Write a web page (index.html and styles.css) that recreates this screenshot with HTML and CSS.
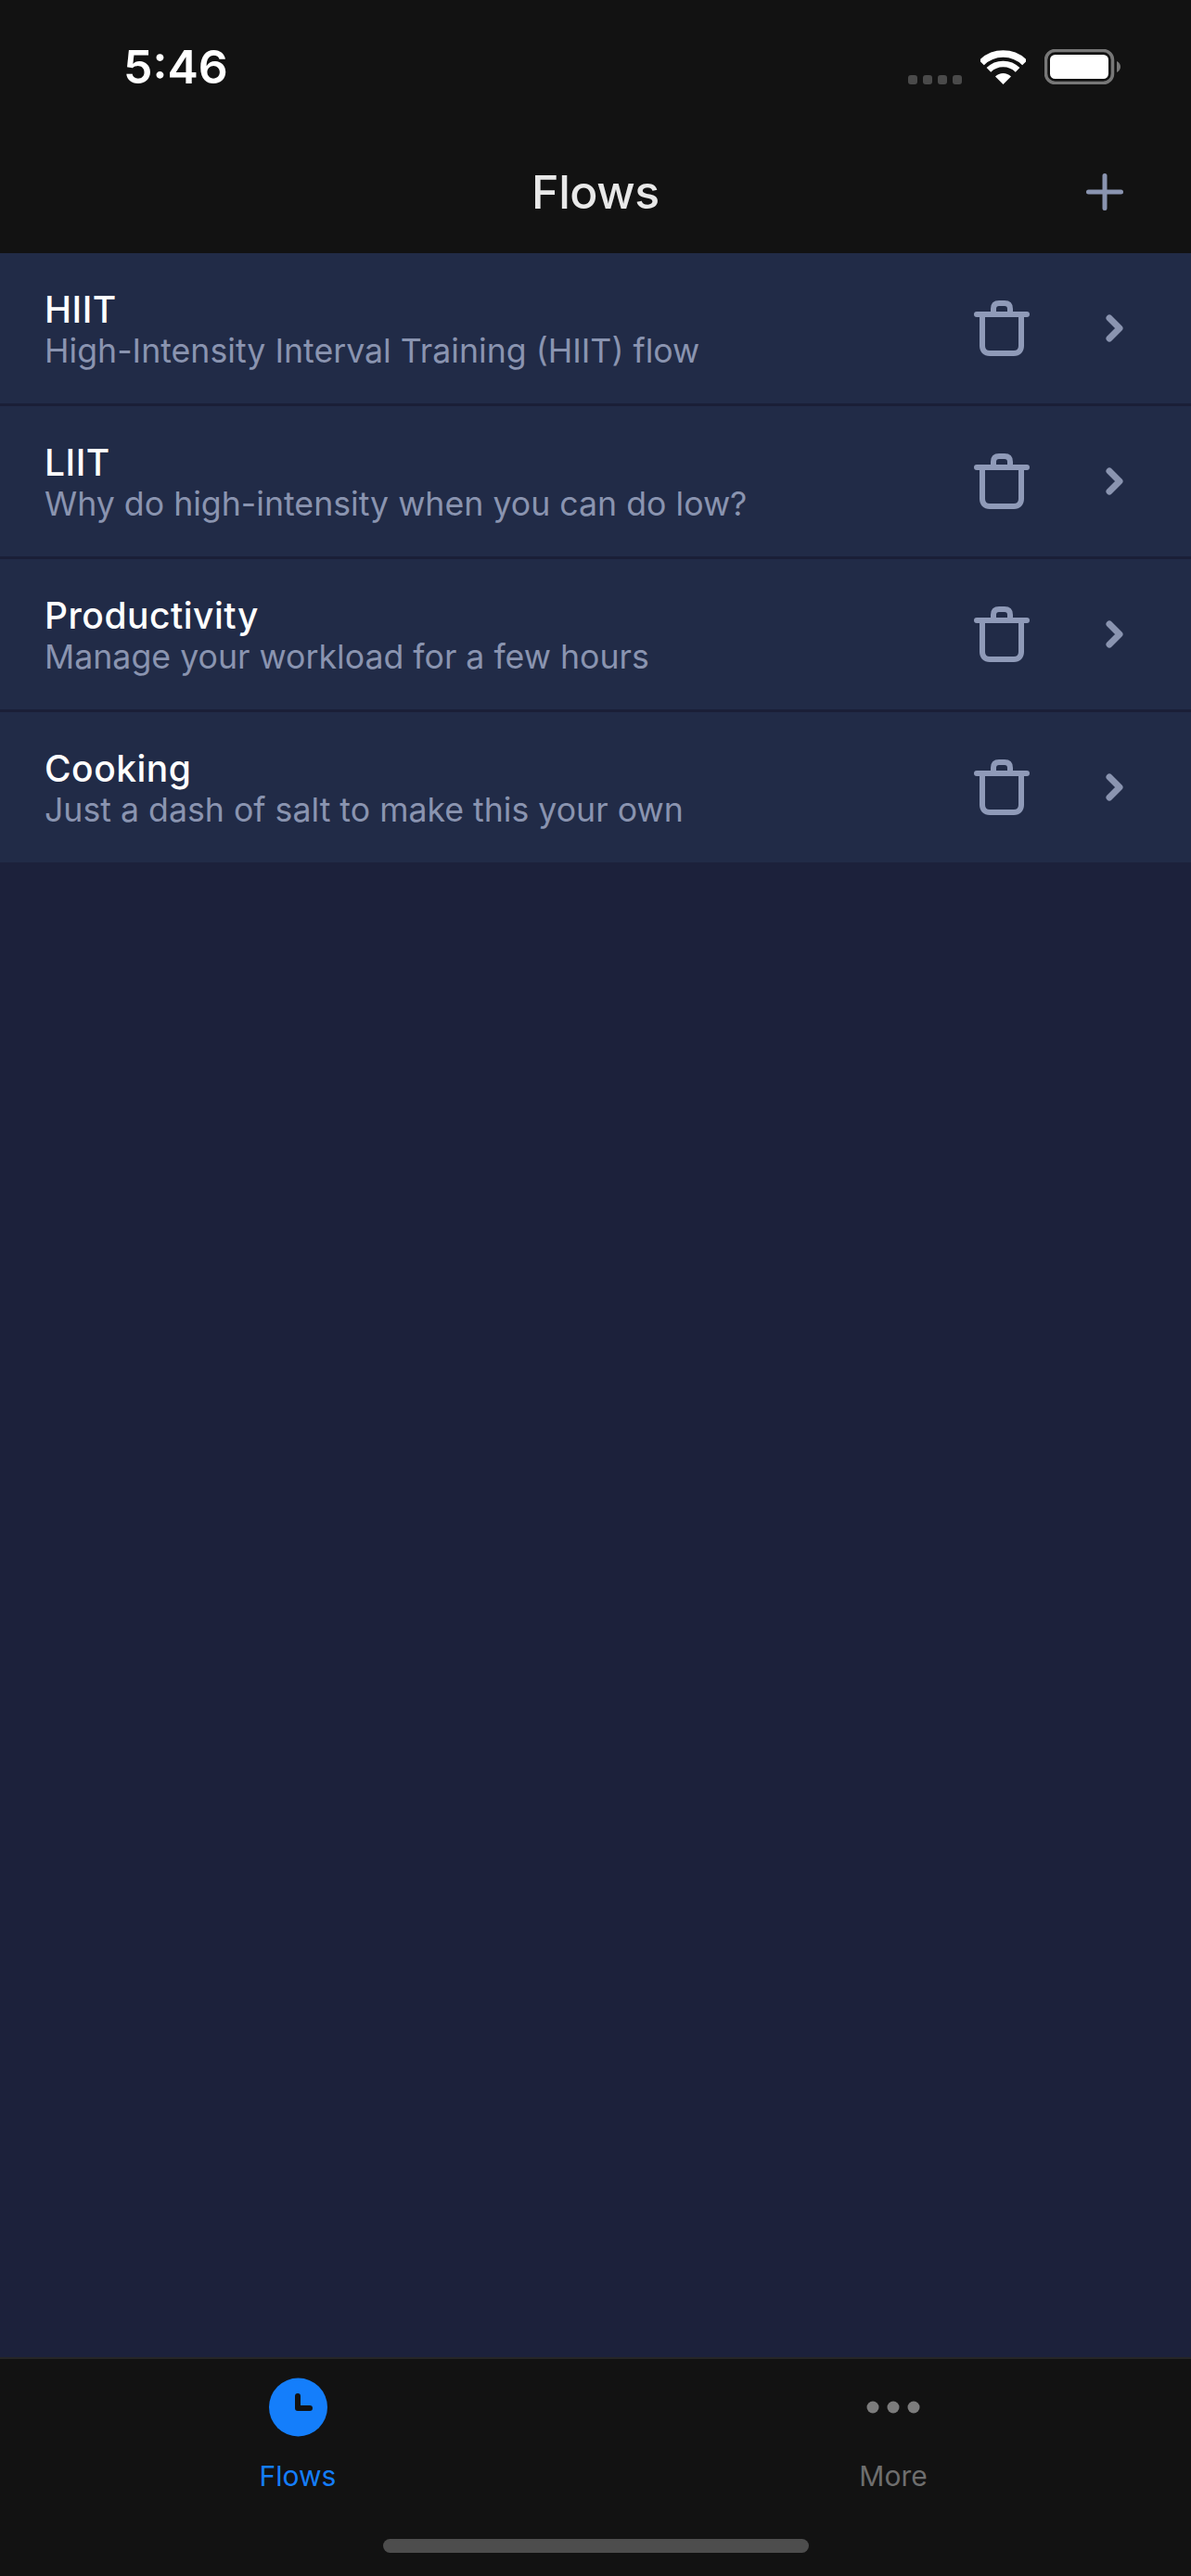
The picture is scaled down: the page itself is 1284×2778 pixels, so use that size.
FILE: index.html
```html
<!DOCTYPE html>
<html>
<head>
    <title>Flows</title>
    <link rel="stylesheet" href="styles.css">
</head>
<body>
  <div class="app">
    <header class="top">
      <div class="status-bar">
        <span class="time">5:46</span>
        <div class="status-icons">
          <div class="signal">
            <span class="signal-dot"></span>
            <span class="signal-dot"></span>
            <span class="signal-dot"></span>
            <span class="signal-dot"></span>
          </div>
          <svg class="wifi" width="49" height="37" viewBox="0 0 49 37">
            <path d="M1.2 13.7A33 33 0 0 1 47.8 13.7" fill="none" stroke="#fff" stroke-width="7.5"/>
            <path d="M8.9 21.4A22 22 0 0 1 40.1 21.4" fill="none" stroke="#fff" stroke-width="6.5"/>
            <path d="M24.5 37L16 28.5A12 12 0 0 1 33 28.5Z" fill="#fff"/>
          </svg>
          <svg class="battery" width="82" height="38" viewBox="0 0 82 38">
            <rect x="1.5" y="1.5" width="72" height="35" rx="10" fill="none" stroke="#777" stroke-width="3.5"/>
            <rect x="6" y="6" width="63" height="26" rx="5.5" fill="#fff"/>
            <path d="M78 13C80.500 14 82 16.500 82 19C82 21.500 80.500 24 78 25Z" fill="#777"/>
          </svg>
        </div>
      </div>
      <div class="nav-bar">
        <span></span>
        <h1 class="nav-title">Flows</h1>
        <svg class="plus" width="40" height="40" viewBox="0 0 40 40">
          <path d="M20 2.500V37.500M2.500 20H37.500" fill="none" stroke="#8a94b0" stroke-width="5" stroke-linecap="round"/>
        </svg>
      </div>
    </header>

    <main class="list">
      <div class="row">
        <div class="row-text">
          <div class="row-title">HIIT</div>
          <div class="row-sub">High-Intensity Interval Training (HIIT) flow</div>
        </div>
        <svg class="trash" width="60" height="60" viewBox="0 0 60 60"><use href="#trash-icon"/></svg>
        <svg class="chevron" width="19" height="30" viewBox="0 0 19 30"><use href="#chevron-icon"/></svg>
      </div>
      <div class="row">
        <div class="row-text">
          <div class="row-title">LIIT</div>
          <div class="row-sub">Why do high-intensity when you can do low?</div>
        </div>
        <svg class="trash" width="60" height="60" viewBox="0 0 60 60"><use href="#trash-icon"/></svg>
        <svg class="chevron" width="19" height="30" viewBox="0 0 19 30"><use href="#chevron-icon"/></svg>
      </div>
      <div class="row">
        <div class="row-text">
          <div class="row-title">Productivity</div>
          <div class="row-sub">Manage your workload for a few hours</div>
        </div>
        <svg class="trash" width="60" height="60" viewBox="0 0 60 60"><use href="#trash-icon"/></svg>
        <svg class="chevron" width="19" height="30" viewBox="0 0 19 30"><use href="#chevron-icon"/></svg>
      </div>
      <div class="row">
        <div class="row-text">
          <div class="row-title">Cooking</div>
          <div class="row-sub">Just a dash of salt to make this your own</div>
        </div>
        <svg class="trash" width="60" height="60" viewBox="0 0 60 60"><use href="#trash-icon"/></svg>
        <svg class="chevron" width="19" height="30" viewBox="0 0 19 30"><use href="#chevron-icon"/></svg>
      </div>
    </main>

    <footer class="tab-bar">
      <div class="tabs">
        <div class="tab tab-active">
          <svg width="64" height="64" viewBox="0 0 64 64">
            <circle cx="32.500" cy="32" r="31.500" fill="#147efb"/>
            <path d="M32 20V33H45" fill="none" stroke="#121212" stroke-width="6" stroke-linecap="round" stroke-linejoin="round"/>
          </svg>
          <span class="tab-label">Flows</span>
        </div>
        <div class="tab">
          <svg width="64" height="64" viewBox="0 0 64 64">
            <circle cx="10" cy="32" r="6.500" fill="#7c7c7c"/>
            <circle cx="32" cy="32" r="6.500" fill="#7c7c7c"/>
            <circle cx="54" cy="32" r="6.500" fill="#7c7c7c"/>
          </svg>
          <span class="tab-label">More</span>
        </div>
      </div>
      <div class="home-indicator"></div>
    </footer>
  </div>

  <svg class="icon-defs" width="0" height="0">
    <defs>
      <g id="trash-icon" fill="none" stroke="#8f9ab8" stroke-width="6" stroke-linecap="round" stroke-linejoin="round">
        <path d="M3 15H57"/>
        <path d="M9 15V49C9 54 12 57 17 57H43C48 57 51 54 51 49V15"/>
        <path d="M21 15V9C21 5 23 3 27 3H33C37 3 39 5 39 9V15"/>
      </g>
      <path id="chevron-icon" d="M4 4L15 15L4 26" fill="none" stroke="#8a94b0" stroke-width="7" stroke-linecap="round" stroke-linejoin="round"/>
    </defs>
  </svg>
</body>
</html>
```

FILE: styles.css
```css
html, body {
    margin: 0;
    padding: 0;
}
body {
    font-family: Inter, "Liberation Sans", sans-serif;
    background-color: #1c213b;
}
.app {
    width: 1284px;
    height: 2778px;
    display: flex;
    flex-direction: column;
}
.top {
    background-color: #121212;
}
.status-bar {
    height: 147px;
    display: flex;
    justify-content: space-between;
    align-items: flex-start;
    padding: 0 76px 0 133px;
}
.time {
    margin-top: 42px;
    font-size: 50px;
    line-height: 60px;
    font-weight: 600;
    color: #fff;
}
.status-icons {
    margin-top: 53px;
    display: flex;
    align-items: flex-end;
}
.signal {
    display: flex;
    gap: 6px;
    margin-right: 20px;
}
.signal-dot {
    width: 10px;
    height: 10px;
    border-radius: 3px;
    background-color: #4a4a4a;
}
.wifi {
    margin-right: 20px;
}
.nav-bar {
    height: 126px;
    display: grid;
    grid-template-columns: 1fr auto 1fr;
    align-items: center;
    padding: 0 73px 6px;
    box-sizing: border-box;
}
.nav-title {
    margin: 0;
    font-size: 50px;
    line-height: 60px;
    font-weight: 500;
    letter-spacing: -0.4px;
    color: #e8e8e8;
}
.plus {
    justify-self: end;
}
.list {
    flex: 1;
}
.row {
    height: 165px;
    box-sizing: border-box;
    display: flex;
    align-items: center;
    padding: 0 73px 0 48px;
    background-color: #212b47;
    border-bottom: 3px solid #1a1f37;
}
.row:last-child {
    height: 162px;
    border-bottom: none;
}
.row-text {
    flex: 1;
    padding-top: 3px;
}
.row-title {
    font-size: 39px;
    line-height: 45px;
    font-weight: 550;
    letter-spacing: 0.5px;
    color: #fff;
}
.row-sub {
    font-size: 35.7px;
    line-height: 45px;
    color: #8a94b0;
}
.chevron {
    margin-left: 82px;
}
.tab-bar {
    height: 236px;
    box-sizing: border-box;
    background-color: #121212;
    border-top: 2px solid #262626;
}
.tabs {
    display: flex;
    padding-top: 20px;
}
.tab {
    flex: 1;
    display: flex;
    flex-direction: column;
    align-items: center;
    gap: 24px;
}
.tab-label {
    font-size: 30px;
    line-height: 36px;
    color: #6e6e6e;
}
.tab-active .tab-label {
    color: #147efb;
}
.home-indicator {
    width: 459px;
    height: 15px;
    margin: 50px auto 0;
    border-radius: 8px;
    background-color: #4d4d4d;
}
.icon-defs {
    position: absolute;
}
```
